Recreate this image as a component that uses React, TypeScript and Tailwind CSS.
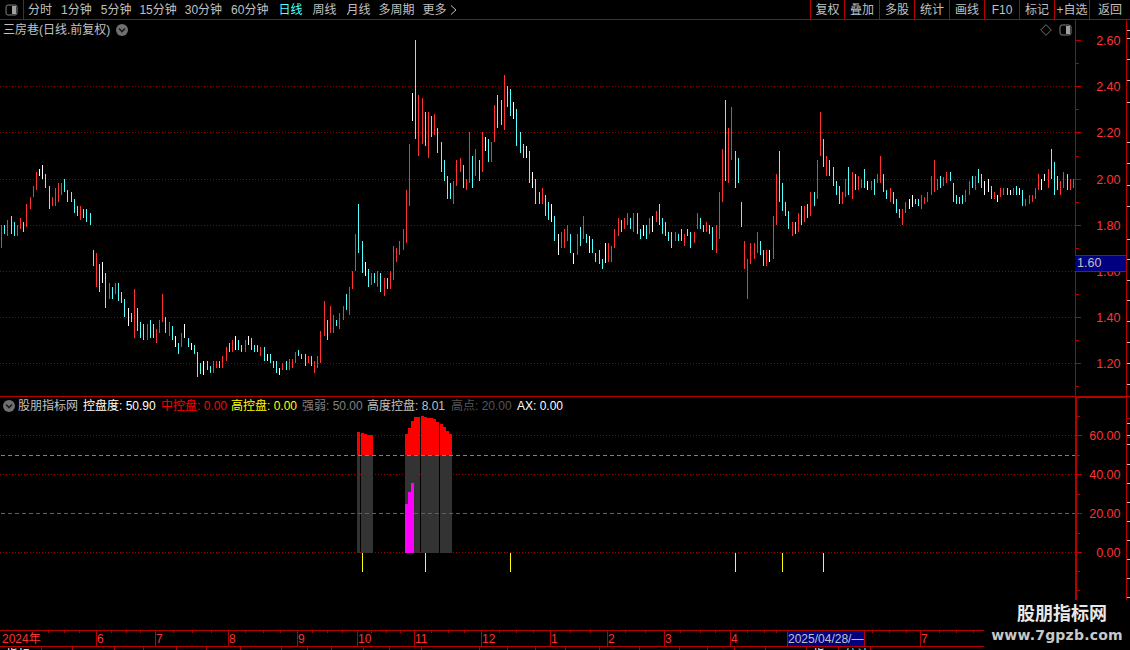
const RED_LINE = "#b80000";
const COLORS: Record<string, string> = { r: "#ff3232", c: "#54ffff", w: "#ffffff" };

// each run: offset x, offset y, then bars "colour x,top,bottom" in 1/3 pixel units
const RUNS: [number, number, string][] = [
  [0, 150, "r4,225,293 c13,225,252 r22,210,258 c34,198,252 c43,216,258 r52,225,258 r61,204,237 c70,216,246 r79,162,231 r91,141,177 r100,108,141 r109,66,120 w118,57,78 w127,45,87 c136,72,114 c148,108,177 r157,141,168 r166,114,168 r175,99,156 r184,99,135 c193,87,126 c202,120,156 c214,126,156 c223,147,189 c232,168,198 r241,168,210 c250,177,204 c259,177,216 c271,189,225 c280,300,348 r289,309,411 c298,342,426 w307,336,399 c316,369,474 r328,399,447 c337,411,447 r346,399,432 c355,399,453 c364,426,459 c373,447,501 w385,474,528 c394,489,516 r403,417,564 c412,474,543 c421,516,564 c430,522,570 r442,522,570 c451,510,564 c460,522,564 r469,537,579 r478,510,549 r487,432,516 c496,501,549 r508,516,558 c517,528,570 w526,558,591 c535,579,612 r544,549,591 w553,522,564 c565,564,591 w574,579,600 c583,585,612 c592,606,681"],
  [200, 30, "c1,999,1032 w10,993,1035 c22,993,1020 c31,1008,1029 r40,993,1029 r49,993,1014 c58,993,1014 r67,978,1014 r79,951,993 c88,939,966 r97,930,966 w106,918,960 c115,930,960 c124,945,966 r136,930,966 w145,918,945 c154,924,960 c163,945,966 c172,945,966 r181,951,978 c193,951,993 w202,972,993 c211,972,999 c220,993,1014 c229,993,1029 w238,1014,1035 r247,999,1020 c259,993,1020 r268,987,1020 r277,987,1014 r286,966,999 c295,960,978 c304,972,987 c316,972,1008 r325,978,999 c334,978,1008 r343,993,1029 r352,978,1014 r361,903,999 r373,813,918 c382,870,930 r391,828,909 r400,855,909 c409,870,888 r418,849,897 r430,828,870 c439,792,840 r448,771,855 r457,723,777 r466,612,723 c475,522,669 c487,633,729 w496,696,738 c505,717,771 r514,729,765 c523,729,759 r532,723,771 c541,729,786 r553,744,798 c562,744,777 r571,723,777 r580,648,750 r589,654,696 r598,633,675"],
  [380, 30, "r70,597,660 r79,480,639 r88,342,528 w97,189,273 c106,30,327 r115,195,378 r127,204,342 c136,246,348 r145,246,384 c154,258,321 r163,252,315 c172,294,369 c184,336,426 c193,390,453 c202,438,507 c211,459,507 r220,453,522 r229,390,468 r241,384,426 c250,405,474 r259,447,480 r268,306,459 c277,378,474 r286,357,438 c298,390,453 r307,306,426 w316,321,363 c325,327,396 r334,336,396 r343,225,336 c352,195,294 c364,210,285 r373,135,300 c382,168,231 c391,177,258 w400,216,267 c409,237,348 c421,306,369 c430,342,384 w439,348,384 c448,363,459 w457,426,474 c466,447,522 c478,486,522 r487,474,522 c496,495,558 c505,516,570 w514,522,576 c523,558,633 w535,612,675 r544,606,654 r553,597,654 r562,585,633 c571,612,669 w580,669,702 r592,612,675"],
  [560, 90, "c61,411,468 r70,378,447 c79,432,459 w88,438,489 c97,447,489 c106,489,516 c118,480,522 c127,507,537 w136,459,519 r145,459,516 r154,468,516 r163,417,474 r175,384,438 c184,390,426 r193,384,417 r202,369,405 c211,384,417 r220,369,426 c232,369,432 c241,417,447 w250,405,438 c259,405,447 r268,384,432 w277,378,426 r289,363,396 c298,342,405 c307,384,432 c316,396,438 c325,426,453 c334,426,474 r346,426,453 c355,432,453 c364,417,453 r373,432,468 c382,417,438 c391,426,474 r403,426,459 r412,369,417 c421,384,417 c430,405,426 r439,396,426 c448,405,432 c457,411,480 r469,405,489 r478,306,447 r487,177,336 c496,30,273 r505,114,279 r514,51,210 c526,183,294 c535,204,279 c544,336,411 r553,453,537 r562,507,627 r571,459,522 r583,459,507 r592,426,489 c601,453,495 c610,480,528 r619,480,528 w628,480,516 r640,378,507 r649,252,405 c658,183,336 c667,279,363 c676,336,378 c685,363,417 r697,396,438 c706,396,432 r715,369,426 c724,348,405 r733,348,396 c742,342,384 r751,306,378 c763,306,348 r772,210,327 r781,66,198 c790,147,231 r799,198,258 c808,210,258 c820,231,288 c829,273,315 c838,288,342"],
  [830, 20, "r37,516,552 r46,477,531 c55,441,525 r67,456,537 c76,462,510 r85,468,510 r94,477,504 c103,447,504 w112,483,510 r124,483,510 c133,477,525 r142,462,489 r151,408,489 c160,462,516 c169,510,537 r181,504,546 c190,516,552 c199,537,579 c208,567,594 r217,567,615 r226,546,579 w238,537,567 w247,525,561 c256,537,552 c265,537,558 r274,525,567 r283,531,552 r292,516,546 r304,468,525 r313,420,516 r322,477,510 c331,468,504 r340,471,498 r349,456,489 c361,456,483 c370,489,546 c379,525,552 c388,531,552 c397,525,552 r406,510,546 r418,483,525 c427,468,504 r436,468,510 c445,447,489 c454,462,504 w463,483,525 w475,477,516 c484,498,537 r493,516,537 w502,525,546 r511,504,531 r520,504,525 c532,504,525 w541,510,525 r550,504,525 c559,498,525 w568,504,525 c577,510,558 r586,537,558 r598,525,552 r607,525,546 r616,504,537 r625,462,510 w634,477,510 w643,462,483 r655,447,504 c664,387,477 c673,426,525 c682,468,510 r691,483,525 r700,456,504 c712,462,510 r721,477,510 r730,477,504"],
];

const BARS = RUNS.flatMap(([ox, oy, s]) =>
  s.split(" ").map((item) => {
    const [x, t, b] = item.slice(1).split(",").map(Number);
    return { x: Math.floor(ox + x / 3), y: oy + t / 3, h: (b - t) / 3, color: COLORS[item[0]] };
  }),
);

const PRICE_GRID = [86, 132, 179, 225, 271, 317, 363];
const PRICE_LABELS: [string, number][] = [["2.60", 40], ["2.40", 86], ["2.20", 132], ["2.00", 179], ["1.80", 225], ["1.60", 271], ["1.40", 317], ["1.20", 363]];
const IND_LABELS: [string, number][] = [["60.00", 435], ["40.00", 474], ["20.00", 513], ["0.00", 552]];
const IND_MINOR = [416, 455, 494, 533, 571, 590];
const EDGE_TICKS = [30, 38, 59, 80, 102, 142, 163, 185, 206, 239, 259, 280, 300, 321, 342, 363, 384];
const EDGE_TICKS_LOW = [423, 435, 444, 464, 483, 502, 521, 540, 559, 578, 597];

// red columns of the indicator: x, width, top (page y)
const RED_COLS: [number, number, number][] = [
  [357, 3, 432], [361, 3, 433], [364, 3, 434], [367, 6, 435],
  [405, 3, 434], [408, 3, 428], [411, 3, 421], [414, 6, 417],
  [421, 3, 416], [424, 3, 417], [427, 6, 418], [433, 3, 419], [436, 3, 422],
  [440, 3, 424], [443, 3, 427], [446, 3, 431], [449, 3, 434],
];
const MAGENTA: [number, number][] = [[405, 504], [408, 492], [411, 483]];
const YELLOW = [362, 425, 510, 735, 782, 823];

const MONTHS: [string, number, boolean?][] = [
  ["2024年", 96], ["6", 59], ["7", 73], ["8", 69], ["9", 60], ["10", 57], ["11", 67], ["12", 69],
  ["1", 57], ["2", 57], ["3", 66], ["4", 57], ["2025/04/28/—", 77, true], ["", 56], ["7", 64],
];
const TIME_TICKS = [48, 64, 79, 111, 126, 140, 173, 192, 211, 245, 263, 280, 312, 327, 342, 371, 386, 400, 431, 448, 464, 499, 516, 533, 570, 590, 625, 645, 680, 700, 715, 747, 764, 776, 872, 889, 906, 939, 956, 973];
const FOOT_CELLS: [number, string?, string?][] = [
  [42, "指标", "text-white"], [31], [42], [29], [33], [30], [34], [41], [26], [24], [32], [26], [32], [58], [28], [28],
  [30], [34], [40], [40], [28], [27], [31], [41], [32, "指", "text-white"], [32, "统计", "text-[#54ffff]"],
];

const NAV: [string, number][] = [
  ["分时", 9], ["1分钟", 9], ["5分钟", 8], ["15分钟", 8], ["30分钟", 9], ["60分钟", 10],
  ["日线", 10], ["周线", 10], ["月线", 8], ["多周期", 8],
];
const ACTIONS: [string, number][] = [
  ["复权", 34], ["叠加", 35], ["多股", 35], ["统计", 35], ["画线", 35], ["F10", 35], ["标记", 35], ["+自选", 35], ["返回", 41],
];

function PanelIcon() {
  return (
    <svg width="13" height="12" viewBox="0 0 13 12">
      <rect x="1" y="1" width="11" height="10" rx="2" fill="none" stroke="#808080" />
      <rect x="7" y="2" width="4" height="8" fill="#a0a0a0" />
    </svg>
  );
}

function Chevron() {
  return (
    <svg width="12" height="12" viewBox="0 0 12 12" className="shrink-0">
      <circle cx="6" cy="6" r="6" fill="#707070" />
      <path d="M3 4.5 L6 7.5 L9 4.5" fill="none" stroke="#1a1a1a" strokeWidth="1.6" />
    </svg>
  );
}

function Axis({ y0, h, labels, minor, left }: { y0: number; h: number; labels: [string, number][]; minor: number[]; left: number }) {
  return (
    <svg width={1126 - left} height={h} viewBox={`${left} ${y0} ${1126 - left} ${h}`} shapeRendering="crispEdges" className="block">
      {labels.map(([t, y]) => (
        <g key={t}>
          <rect x={left} y={y} width="5" height="1" fill={RED_LINE} />
          <text x="1120.5" y={y + 4.5} textAnchor="end" fill="#ff3232" fontSize="12.5">{t}</text>
        </g>
      ))}
      {minor.map((y) => (
        <rect key={y} x={left} y={y} width="3" height="1" fill={RED_LINE} />
      ))}
    </svg>
  );
}

function EdgeTicks({ y0, h, ticks, long = [] }: { y0: number; h: number; ticks: number[]; long?: number[] }) {
  return (
    <svg width="3" height={h} viewBox={`0 ${y0} 3 ${h}`} shapeRendering="crispEdges" className="block">
      {ticks.map((y) => (
        <rect key={y} x="0" y={y} width="3" height="1" fill="#c0c0c0" />
      ))}
      {long.map((y) => (
        <rect key={y} x="0" y={y} width="3" height="1" fill={RED_LINE} />
      ))}
    </svg>
  );
}

function PriceChart() {
  return (
    <svg width="1075" height="357" viewBox="0 39 1075 357" shapeRendering="crispEdges" className="block">
      {PRICE_GRID.map((y) => (
        <line key={y} x1="0" x2="1075" y1={y + 0.5} y2={y + 0.5} stroke="#8c0000" strokeDasharray="1 2" />
      ))}
      {BARS.map((b, i) => (
        <rect key={i} x={b.x} y={b.y} width="1" height={b.h} fill={b.color} />
      ))}
    </svg>
  );
}

function IndicatorChart() {
  const base = 553;
  const mid = 455;
  return (
    <svg width="1075" height="185" viewBox="0 415 1075 185" shapeRendering="crispEdges" className="block">
      {[435, 474, 552].map((y) => (
        <line key={y} x1="0" x2="1075" y1={y + 0.5} y2={y + 0.5} stroke="#a00000" strokeDasharray="1 2" />
      ))}
      <rect x="357" y={mid} width="3" height={base - mid} fill="#333333" />
      <rect x="361" y={mid} width="12" height={base - mid} fill="#333333" />
      <rect x="405" y={mid} width="15" height={base - mid} fill="#333333" />
      <rect x="421" y={mid} width="18" height={base - mid} fill="#333333" />
      <rect x="440" y={mid} width="12" height={base - mid} fill="#333333" />
      {RED_COLS.map(([x, w, top]) => (
        <rect key={x} x={x} y={top} width={w} height={mid - top} fill="#ff0000" />
      ))}
      {MAGENTA.map(([x, top]) => (
        <rect key={x} x={x} y={top} width="3" height={base - top} fill="#ff00ff" />
      ))}
      <line x1="1" x2="1075" y1="455.5" y2="455.5" stroke="#808080" strokeDasharray="4 3" />
      <line x1="1" x2="1075" y1="513.5" y2="513.5" stroke="#606060" strokeDasharray="4 3" />
      {YELLOW.map((x) => (
        <rect key={x} x={x} y="553" width="1" height="19" fill="#ffff00" />
      ))}
    </svg>
  );
}

function Stat({ name, value, color, w }: { name: string; value: string; color: string; w: number }) {
  return (
    <span className={`${color} shrink-0 whitespace-nowrap`} style={{ width: w }}>
      {name}: {value}
    </span>
  );
}

export default function App() {
  return (
    <div className="relative flex h-[650px] w-[1130px] flex-col overflow-hidden bg-black font-['Liberation_Sans','Noto_Sans_CJK_SC',sans-serif] text-[12px] text-[#c0c0c0]">
      <div className="flex h-[20px] shrink-0 items-center border-b border-[#b80000]">
        <div className="flex h-full w-[24px] shrink-0 items-center justify-center border-r border-[#b80000] pr-[1px]">
          <PanelIcon />
        </div>
        <div className="flex flex-1 items-center pl-[4px]">
          {NAV.map(([t, gap]) => (
            <span key={t} className={t === "日线" ? "text-[#54ffff]" : ""} style={{ marginRight: gap }}>
              {t}
            </span>
          ))}
          <span>更多</span>
          <svg width="7" height="10" viewBox="0 0 7 10" className="ml-[3px]">
            <path d="M1 0.5 L6 5 L1 9.5" fill="none" stroke="#c0c0c0" />
          </svg>
        </div>
        <div className="flex h-full shrink-0">
          {ACTIONS.map(([t, w]) => (
            <div key={t} className="flex items-center justify-center border-l border-[#b80000]" style={{ width: w }}>
              {t}
            </div>
          ))}
        </div>
      </div>

      <div className="flex h-[377px] shrink-0 border-b border-[#b80000]">
        <div className="flex w-[1075px] shrink-0 flex-col">
          <div className="flex h-[19px] shrink-0 items-center justify-between pl-[3px] pr-[3px]">
            <div className="flex items-center gap-[6px]">
              <span>三房巷(日线.前复权)</span>
              <Chevron />
            </div>
            <div className="flex items-center gap-[7px]">
              <svg width="12" height="12" viewBox="0 0 12 12">
                <path d="M6 0.7 L11.3 6 L6 11.3 L0.7 6 Z" fill="none" stroke="#707070" />
              </svg>
              <PanelIcon />
            </div>
          </div>
          <PriceChart />
        </div>
        <div className="w-[51px] shrink-0 border-l border-[#b80000]">
          <Axis y0={20} h={376} left={1076} labels={PRICE_LABELS} minor={[63, 109, 156, 202, 248, 294, 340, 386]} />
        </div>
        <div className="flex-1 border-l border-[#b80000]">
          <EdgeTicks y0={20} h={376} ticks={EDGE_TICKS} />
        </div>
      </div>

      <div className="flex h-[233px] shrink-0">
        <div className="flex w-[1075px] shrink-0 flex-col">
          <div className="flex h-[18px] shrink-0 items-center pl-[3px]">
            <Chevron />
            <span className="ml-[3px] w-[65px] shrink-0">股朋指标网</span>
            <Stat name="控盘度" value="50.90" color="text-white" w={78} />
            <Stat name="中控盘" value="0.00" color="text-[#ff0000]" w={70} />
            <Stat name="高控盘" value="0.00" color="text-[#ffff00]" w={71} />
            <Stat name="强弱" value="50.00" color="text-[#808080]" w={65} />
            <Stat name="高度控盘" value="8.01" color="text-[#c0c0c0]" w={84} />
            <Stat name="高点" value="20.00" color="text-[#555555]" w={66} />
            <Stat name="AX" value="0.00" color="text-white" w={60} />
          </div>
          <IndicatorChart />
        </div>
        <div className="flex h-[203px] shrink-0">
          <div className="w-[51px] shrink-0 border-l-2 border-t border-[#b80000]">
            <Axis y0={398} h={202} left={1077} labels={IND_LABELS} minor={IND_MINOR} />
          </div>
          <div className="w-[4px] border-l border-[#b80000]">
            <EdgeTicks y0={397} h={203} ticks={EDGE_TICKS_LOW} long={[418, 437]} />
          </div>
        </div>
      </div>

      <div className="relative flex h-[17px] shrink-0 border-y border-[#b80000] text-[#ff3232]">
        {MONTHS.map(([t, w, active], i) => (
          <div
            key={i}
            className={`flex shrink-0 items-center overflow-hidden whitespace-nowrap leading-none ${i > 0 ? "border-l border-[#b80000]" : "pl-[2px]"} ${active ? "bg-[#000080] text-[#c0c0c0]" : ""}`}
            style={{ width: w }}
          >
            {t}
          </div>
        ))}
        <svg width="984" height="2" viewBox="0 0 984 2" className="absolute left-0 top-0" shapeRendering="crispEdges">
          {TIME_TICKS.map((x) => (
            <rect key={x} x={x} y="0" width="1" height="2" fill={RED_LINE} />
          ))}
        </svg>
      </div>

      <div className="flex h-[3px] shrink-0 overflow-hidden text-[12px] leading-[16px]">
        {FOOT_CELLS.map(([w, t, color], i) => (
          <div key={i} className={`shrink-0 overflow-hidden border-r border-[#b80000] pl-[6px] ${color ?? ""}`} style={{ width: w }}>
            {t}
          </div>
        ))}
      </div>

      {/* current price tag over the axis */}
      <div className="absolute left-[1075px] top-[255px] flex h-[17px] w-[51px] items-center border-y border-[#b80000] bg-[#000080] pl-[2px] text-[12.5px] text-[#c0c0c0]">
        1.60
      </div>

      {/* site watermark */}
      <div className="absolute bottom-0 right-0 flex h-[50px] w-[146px] flex-col items-center bg-black pt-[3px]">
        <span className="ml-[10px] text-[18px] font-bold leading-[22px] text-[#e8e8e8]">股朋指标网</span>
        <span className="font-['DejaVu_Sans',sans-serif] text-[14px] font-bold leading-[20px] tracking-[0.2px] text-[#c8c8c8]">www.7gpzb.com</span>
      </div>
    </div>
  );
}
